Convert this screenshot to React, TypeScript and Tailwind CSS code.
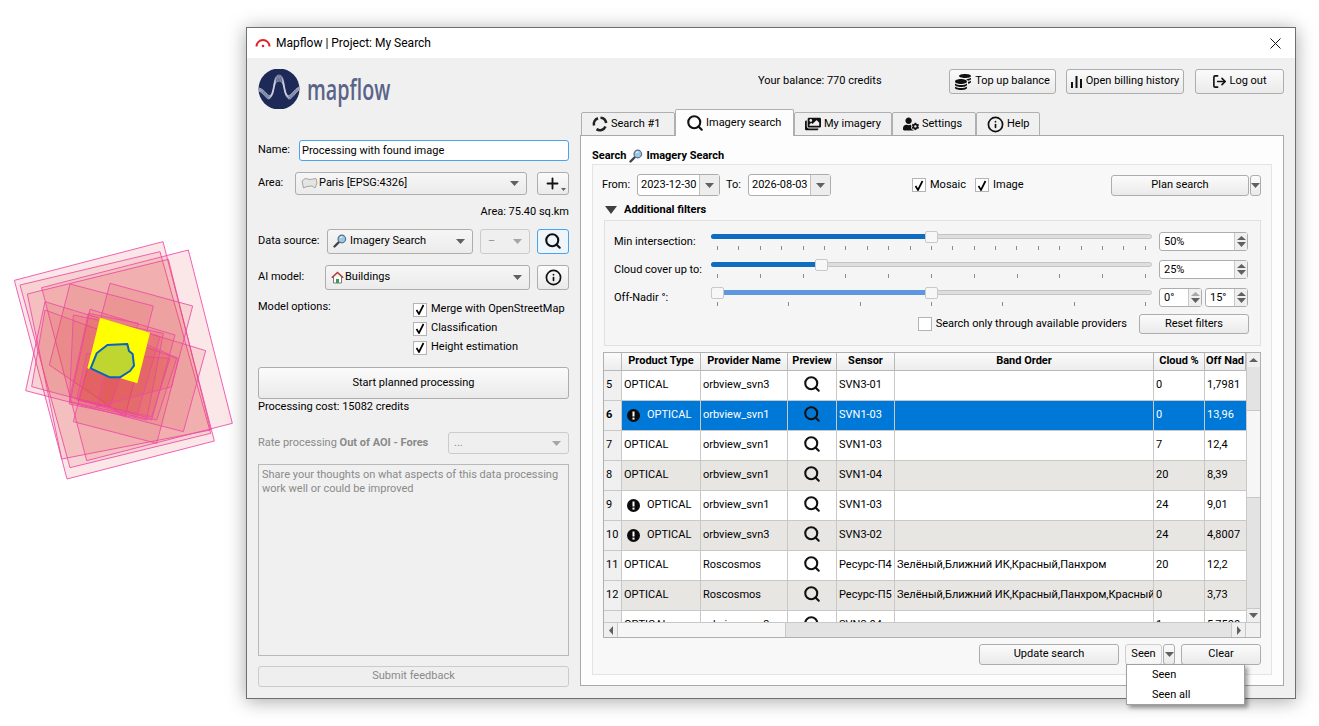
import * as React from "react";
import { Info, LogOut, Plus, Search } from "lucide-react";
import { FaCoins, FaImages, FaUserCog } from "react-icons/fa";

const BTN =
  "flex items-center justify-center rounded-[3px] border border-[#adadad] bg-[linear-gradient(#fbfbfb,#eaeaea)] text-black";
const COMBO =
  "flex items-center rounded-[3px] border border-[#adadad] bg-[linear-gradient(#f6f6f6,#ebebeb)] text-black";

const COLS = "grid grid-cols-[18px_79px_87px_49px_58px_259px_51px_41px]";

const FOOTPRINTS = [
  "43,181 489,65 643,663 201,777",
  "60,195 480,95 632,640 210,743",
  "82,222 505,118 632,630 185,717",
  "565,90 697,610 260,722 125,203",
  "330,190 578,258 470,670 220,605",
  "210,192 460,258 375,590 148,435",
  "135,245 617,392 550,635 77,512",
  "135,270 530,415 470,600 95,500",
  "270,268 525,345 455,600 210,545",
  "220,285 490,340 440,600 208,552",
  "265,280 415,310 330,560 210,530",
  "260,400 510,415 455,590 230,540",
  "300,300 480,350 410,590 235,540",
  "340,330 535,415 515,500 290,560",
];

const ROWS = [
  { n: "5", warn: false, provider: "orbview_svn3", sensor: "SVN3-01", bands: "", cloud: "0", nadir: "1,7981" },
  { n: "6", warn: true, provider: "orbview_svn1", sensor: "SVN1-03", bands: "", cloud: "0", nadir: "13,96", selected: true },
  { n: "7", warn: false, provider: "orbview_svn1", sensor: "SVN1-03", bands: "", cloud: "7", nadir: "12,4" },
  { n: "8", warn: false, provider: "orbview_svn1", sensor: "SVN1-04", bands: "", cloud: "20", nadir: "8,39", alt: true },
  { n: "9", warn: true, provider: "orbview_svn1", sensor: "SVN1-03", bands: "", cloud: "24", nadir: "9,01" },
  { n: "10", warn: true, provider: "orbview_svn3", sensor: "SVN3-02", bands: "", cloud: "24", nadir: "4,8007", alt: true },
  { n: "11", warn: false, provider: "Roscosmos", sensor: "Ресурс-П4", bands: "Зелёный,Ближний ИК,Красный,Панхром", cloud: "20", nadir: "12,2" },
  { n: "12", warn: false, provider: "Roscosmos", sensor: "Ресурс-П5", bands: "Зелёный,Ближний ИК,Красный,Панхром,Красный", cloud: "0", nadir: "3,73", alt: true },
  { n: "", warn: false, provider: "orbview_svn3", sensor: "SVN3-04", bands: "", cloud: "1", nadir: "5,7500" },
];

function Caret({ className = "" }: { className?: string }) {
  return (
    <svg width={9} height={5} viewBox="0 0 9 5" className={className} aria-hidden>
      <path d="M0 0H9L4.5 5Z" fill="#606060" />
    </svg>
  );
}

function CaretUp({ muted }: { muted?: boolean }) {
  return (
    <svg width={9} height={4} viewBox="0 0 9 4" aria-hidden>
      <path d="M0 4H9L4.5 0Z" fill={muted ? "#a8a8a8" : "#606060"} />
    </svg>
  );
}

function CheckBox({ checked = true }: { checked?: boolean }) {
  return (
    <span className="flex h-[14px] w-[14px] shrink-0 items-center justify-center border border-[#b4b4b4] bg-white">
      {checked && (
        <svg width={10} height={11} viewBox="0 0 10 11" fill="none" aria-hidden>
          <path d="M1.5 6L4 10L8.5 1" stroke="#000" strokeWidth={1.7} />
        </svg>
      )}
    </span>
  );
}

function MagnifierGlyph() {
  return (
    <svg width={14} height={14} viewBox="0 0 14 14" fill="none" aria-hidden>
      <path d="M6 8L1.5 12.5" stroke="#444" strokeWidth={2.4} strokeLinecap="round" />
      <circle cx={8.8} cy={5} r={3.8} fill="#9cc6e6" stroke="#54718a" strokeWidth={1.2} />
      <path d="M7 3.6C7.6 3 8.4 2.8 9.4 3" stroke="#fff" strokeWidth={1} />
    </svg>
  );
}

function HouseGlyph() {
  return (
    <svg width={13} height={13} viewBox="0 0 13 13" fill="none" aria-hidden>
      <path d="M2.5 6V12H10.5V6" fill="#fff" stroke="#7b7b7b" />
      <path d="M0.8 6.8L6.5 1.5L12.2 6.8" stroke="#b03a2e" strokeWidth={1.5} />
      <rect x={5} y={8} width={3} height={4} fill="#3d9a4f" />
    </svg>
  );
}

function AreaGlyph() {
  return (
    <svg width={17} height={13} viewBox="0 0 17 13" aria-hidden>
      <path
        d="M1 4L4 1.5L9 2.5L15 1.5L16 6L14 11L11 9L6 9.5L2.5 11Z"
        fill="#e4e4e4"
        stroke="#a5a5a5"
      />
    </svg>
  );
}

function SyncGlyph() {
  return (
    <svg width={16} height={16} viewBox="0 0 16 16" fill="none" aria-hidden>
      <path d="M2 9.5A6.2 6.2 0 0 1 6 2.2" stroke="#222" strokeWidth={2.6} />
      <path d="M8.5 1.8A6.2 6.2 0 0 1 14.2 7" stroke="#222" strokeWidth={2.6} />
      <path d="M13.5 10.5A6.2 6.2 0 0 1 4.5 13.2" stroke="#222" strokeWidth={2.6} />
    </svg>
  );
}

function BarsGlyph() {
  return (
    <svg width={11} height={12} viewBox="0 0 11 12" aria-hidden>
      <rect x={0} y={6} width={2} height={6} fill="#111" />
      <rect x={4.5} y={0} width={2} height={12} fill="#111" />
      <rect x={9} y={3} width={2} height={9} fill="#111" />
    </svg>
  );
}

function AlertGlyph() {
  return (
    <svg width={13} height={13} viewBox="0 0 13 13" className="shrink-0" aria-hidden>
      <circle cx={6.5} cy={6.5} r={6.5} fill="#0b0b0b" />
      <rect x={5.5} y={2.5} width={2} height={5} fill="#fff" />
      <rect x={5.5} y={8.6} width={2} height={2} fill="#fff" />
    </svg>
  );
}

function LogoMark() {
  const lines = [0, 1, 2, 3, 4, 5];
  return (
    <svg width={42} height={40} viewBox="0 0 42 40" aria-hidden>
      <circle cx={21} cy={20} r={20.5} fill="#1d2a58" />
      {lines.map((i) => (
        <path
          key={i}
          d={`M1 ${19 + i * 0.6}C7 ${20 + i} 10 ${29 + i} 13 ${26 + i * 0.4}C17 ${19 + i} 15 ${6 + i * 1.2} 21 ${6 + i * 1.2}C27 ${6 + i * 1.2} 25 ${19 + i} 29 ${26 + i * 0.4}C32 ${29 + i} 36 ${20 + i} 41 ${18 + i * 0.6}`}
          stroke="#d5d9e6"
          strokeWidth={0.6}
          fill="none"
        />
      ))}
    </svg>
  );
}

// knob positions are the pixel left edges of the slider handles
function Slider({
  from,
  to,
  ticks,
  fill = "bg-[#0f6cc0]",
}: {
  from?: number;
  to: number;
  ticks: number;
  fill?: string;
}) {
  const start = from ?? 0;
  return (
    <div className="relative h-[28px] w-[441px]">
      <div className="absolute left-0 right-0 top-[7px] h-[5px] rounded-full border border-[#c4c4c4] bg-[#dedede]" />
      <div
        className={`absolute top-[7px] h-[5px] rounded-full ${fill}`}
        style={{ left: start, width: to - start + 6 }}
      />
      {from !== undefined && (
        <span
          className="absolute top-[4px] h-[12px] w-[13px] rounded-[2px] border border-[#c9c9c9] bg-[#f7f7f7]"
          style={{ left: from }}
        />
      )}
      <span
        className="absolute top-[4px] h-[12px] w-[13px] rounded-[2px] border border-[#c9c9c9] bg-[#f7f7f7]"
        style={{ left: to }}
      />
      <div className="absolute left-[6px] right-[6px] top-[19px] flex justify-between">
        {Array.from({ length: ticks }).map((_, i) => (
          <span key={i} className="h-[4px] w-px bg-[#8c8c8c]" />
        ))}
      </div>
    </div>
  );
}

function SpinBox({ value, width, muted }: { value: string; width: string; muted?: boolean }) {
  return (
    <div className={`flex h-[19px] items-stretch rounded-[3px] border border-[#adadad] bg-white ${width}`}>
      <span className="flex-1 pl-[4px] leading-[17px]">{value}</span>
      <span className="flex w-[13px] flex-col items-center justify-center gap-[2px] border-l border-[#c8c8c8] bg-[#efefef]">
        <CaretUp muted={muted} />
        <Caret />
      </span>
    </div>
  );
}

function Tab({
  icon,
  label,
  width,
  active,
}: {
  icon: React.ReactNode;
  label: string;
  width: string;
  active?: boolean;
}) {
  return (
    <div
      className={`flex items-center gap-[3px] rounded-t-[2px] border border-[#b0b0b0] pl-[10px] ${width} ${
        active ? "relative z-10 h-[27px] border-b-0 bg-[#fdfdfd]" : "h-[24px] bg-[#f0f0f0]"
      }`}
    >
      {icon}
      <span className="whitespace-nowrap">{label}</span>
    </div>
  );
}

function DateBox({ value }: { value: string }) {
  return (
    <div className="flex h-[22px] w-[83px] items-stretch rounded-[3px] border border-[#adadad] bg-white">
      <span className="flex-1 pl-[3px] leading-[20px]">{value}</span>
      <span className="flex w-[20px] items-center justify-center border-l border-[#c0c0c0] bg-[#ededed]">
        <Caret />
      </span>
    </div>
  );
}

function Row({ row }: { row: (typeof ROWS)[number] }) {
  const bg = row.selected ? "bg-[#0078d7] text-white" : row.alt ? "bg-[#e8e6e3]" : "bg-white";
  const cell = "flex h-[30px] items-center border-b border-r border-[#c8c8c8] pl-[2px] whitespace-nowrap overflow-hidden";
  return (
    <div className={COLS}>
      <div
        className={`flex h-[30px] items-center border-b border-r border-[#c8c8c8] bg-[#f0f0f0] pl-[2px] text-black ${
          row.selected ? "font-bold" : ""
        }`}
      >
        {row.n}
      </div>
      <div className={`${cell} ${bg} gap-[7px]`}>
        {row.warn && (
          <span className="ml-[3px]">
            <AlertGlyph />
          </span>
        )}
        OPTICAL
      </div>
      <div className={`${cell} ${bg}`}>{row.provider}</div>
      <div className={`${cell} ${bg} justify-center !pl-0 pb-[3px]`}>
        <Search size={18} strokeWidth={2.8} color="#111" />
      </div>
      <div className={`${cell} ${bg}`}>{row.sensor}</div>
      <div className={`${cell} ${bg}`}>{row.bands}</div>
      <div className={`${cell} ${bg}`}>{row.cloud}</div>
      <div className={`${cell} ${bg} !border-r-0`}>{row.nadir}</div>
    </div>
  );
}

function HeaderCell({ label }: { label: string }) {
  return (
    <div className="flex h-[18px] items-center justify-center overflow-hidden whitespace-nowrap border-b border-r border-[#b8b8b8] bg-[linear-gradient(#fbfbfb,#ececec)] font-bold">
      {label}
    </div>
  );
}

function ResultsTable() {
  return (
    <div className="ml-[10px] mt-[6px] flex h-[286px] w-[658px] flex-col border border-[#b0b0b0] bg-white">
      <div className="flex h-[269px]">
        <div className="w-[642px] overflow-hidden">
          <div className={COLS}>
            <HeaderCell label="" />
            <HeaderCell label="Product Type" />
            <HeaderCell label="Provider Name" />
            <HeaderCell label="Preview" />
            <HeaderCell label="Sensor" />
            <HeaderCell label="Band Order" />
            <HeaderCell label="Cloud %" />
            <HeaderCell label="Off Nad" />
          </div>
          {ROWS.map((row) => (
            <Row key={row.sensor + row.n} row={row} />
          ))}
        </div>
        <div className="flex w-[14px] flex-col border-l border-[#c8c8c8] bg-[#e3e3e3]">
          <span className="flex h-[14px] items-center justify-center bg-[#efefef]">
            <CaretUp />
          </span>
          <span className="mt-[43px] h-[88px] border-y border-[#c8c8c8] bg-[#f6f6f6]" />
          <span className="mt-auto flex h-[14px] items-center justify-center border-t border-[#c8c8c8] bg-[#efefef]">
            <Caret />
          </span>
        </div>
      </div>
      <div className="flex h-[15px] border-t border-[#c8c8c8] bg-[#e3e3e3]">
        <span className="flex w-[14px] items-center justify-center border-r border-[#c8c8c8] bg-[#efefef]">
          <svg width={4} height={9} viewBox="0 0 4 9" aria-hidden>
            <path d="M4 0V9L0 4.5Z" fill="#606060" />
          </svg>
        </span>
        <span className="w-[168px] border-r border-[#c8c8c8] bg-[#f6f6f6]" />
        <span className="ml-auto flex w-[14px] items-center justify-center border-l border-[#c8c8c8] bg-[#efefef]">
          <svg width={4} height={9} viewBox="0 0 4 9" aria-hidden>
            <path d="M0 0V9L4 4.5Z" fill="#606060" />
          </svg>
        </span>
        <span className="w-[15px] border-l border-[#c8c8c8] bg-[#f0f0f0]" />
      </div>
    </div>
  );
}

function LeftPanel() {
  return (
    <div className="flex w-[311px] flex-col pt-[11px]">
      <div className="flex h-[40px] items-center">
        <LogoMark />
        <span className="ml-[7px] origin-left scale-x-[0.68] font-['Open_Sans',sans-serif] text-[29px] font-semibold leading-[40px] text-[#5a6488]">
          mapflow
        </span>
      </div>

      <div className="mt-[31px] flex h-[21px] items-center">
        <span className="w-[41px]">Name:</span>
        <div className="h-[21px] flex-1 rounded-[3px] border border-[#4aa3ee] bg-white pl-[2px] leading-[19px]">
          Processing with found image
        </div>
      </div>

      <div className="mt-[10px] flex h-[24px] items-center">
        <span className="w-[37px]">Area:</span>
        <div className={`${COMBO} h-[23px] w-[232px] pl-[5px]`}>
          <AreaGlyph />
          <span className="ml-[1px]">Paris [EPSG:4326]</span>
          <Caret className="ml-auto mr-[7px]" />
        </div>
        <div className={`${BTN} relative ml-auto h-[23px] w-[32px]`}>
          <Plus size={17} strokeWidth={2.6} color="#111" className="mr-[2px]" />
          <svg width={5} height={3} viewBox="0 0 5 3" className="absolute bottom-[3px] right-[2px]" aria-hidden>
            <path d="M0 0H5L2.5 3Z" fill="#606060" />
          </svg>
        </div>
      </div>

      <div className="mt-[10px] h-[14px] text-right leading-[14px]">Area: 75.40 sq.km</div>

      <div className="mt-[9px] flex h-[26px] items-center">
        <span className="w-[69px]">Data source:</span>
        <div className={`${COMBO} h-[25px] w-[146px] pl-[5px]`}>
          <MagnifierGlyph />
          <span className="ml-[3px]">Imagery Search</span>
          <Caret className="ml-auto mr-[7px]" />
        </div>
        <div className="ml-[7px] flex h-[25px] w-[50px] items-center rounded-[3px] border border-[#cbcbcb] bg-[#efefef] pl-[7px] text-[#909090]">
          –
          <Caret className="ml-auto mr-[7px] opacity-50" />
        </div>
        <div className="ml-auto flex h-[25px] w-[32px] items-center justify-center rounded-[3px] border border-[#4aa3ee] bg-[#eef6fc]">
          <Search size={18} strokeWidth={2.8} color="#111" />
        </div>
      </div>

      <div className="mt-[10px] flex h-[26px] items-center">
        <span className="w-[67px]">AI model:</span>
        <div className={`${COMBO} h-[25px] w-[205px] pl-[5px]`}>
          <HouseGlyph />
          <span className="ml-[1px]">Buildings</span>
          <Caret className="ml-auto mr-[7px]" />
        </div>
        <div className={`${BTN} ml-auto h-[25px] w-[32px]`}>
          <Info size={17} strokeWidth={2.4} color="#111" />
        </div>
      </div>

      <div className="mt-[10px] flex h-[57px]">
        <span className="w-[155px] leading-[14px]">Model options:</span>
        <div className="flex flex-col">
          {["Merge with OpenStreetMap", "Classification", "Height estimation"].map((t) => (
            <div key={t} className="flex h-[19px] items-center gap-[4px] whitespace-nowrap">
              <CheckBox />
              {t}
            </div>
          ))}
        </div>
      </div>

      <div className={`${BTN} mt-[10px] h-[32px]`}>Start planned processing</div>
      <div className="mt-px h-[14px] leading-[14px]">Processing cost: 15082 credits</div>

      <div className="mt-[18px] flex h-[22px] items-center text-[#8a8a8a]">
        <span className="w-[190px] whitespace-nowrap">
          Rate processing <b>Out of AOI - Fores</b>
        </span>
        <div className="flex h-[22px] flex-1 items-center rounded-[3px] border border-[#cbcbcb] bg-[#efefef] pl-[5px]">
          ...
          <Caret className="ml-auto mr-[7px] opacity-50" />
        </div>
      </div>

      <div className="mt-[10px] h-[192px] border border-[#b8b8b8] bg-[#f0f0f0] px-[3px] py-[3px] leading-[14px] text-[#8a8a8a]">
        Share your thoughts on what aspects of this data processing work well or could be improved
      </div>

      <div className="mt-[10px] flex h-[21px] items-center justify-center rounded-[3px] border border-[#cbcbcb] bg-[#efefef] text-[#8a8a8a]">
        Submit feedback
      </div>
    </div>
  );
}

function SearchPane() {
  return (
    <div className="relative z-0 mt-[-1px] h-[551px] border border-[#a8a8a8] bg-[#fdfdfd] px-[11px] pt-[13px]">
      <div className="flex h-[14px] items-center gap-[3px] font-bold leading-[14px]">
        Search
        <MagnifierGlyph />
        Imagery Search
      </div>

      <div className="mt-[1px] h-[511px] border border-[#e4e4e4] bg-[#f8f8f8]">
        <div className="mt-[9px] flex h-[22px] items-center pl-[9px]">
          <span className="w-[35px]">From:</span>
          <DateBox value="2023-12-30" />
          <span className="ml-[6px] w-[22px]">To:</span>
          <DateBox value="2026-08-03" />
          <span className="ml-[81px] flex w-[63px] items-center gap-[4px]">
            <CheckBox />
            Mosaic
          </span>
          <span className="flex w-[136px] items-center gap-[4px]">
            <CheckBox />
            Image
          </span>
          <div className={`${BTN} h-[21px] w-[138px]`}>Plan search</div>
          <div className={`${BTN} ml-px h-[21px] w-[11px]`}>
            <Caret />
          </div>
        </div>

        <div className="mt-[7px] flex h-[14px] items-center pl-[12px] font-bold">
          <svg width={12} height={8} viewBox="0 0 12 8" aria-hidden>
            <path d="M0 0H12L6 8Z" fill="#404040" />
          </svg>
          <span className="ml-[7px]">Additional filters</span>
        </div>

        <div className="ml-[11px] mt-[3px] h-[126px] w-[657px] border border-[#e0e0e0] bg-[#f5f5f5] pt-[6px]">
          <div className="flex h-[28px] pl-[9px]">
            <span className="w-[97px] pt-[8px] leading-[14px]">Min intersection:</span>
            <Slider to={214} ticks={21} />
            <div className="ml-[7px] mt-[5px]">
              <SpinBox value="50%" width="w-[89px]" />
            </div>
          </div>
          <div className="flex h-[28px] pl-[9px]">
            <span className="w-[97px] pt-[8px] leading-[14px]">Cloud cover up to:</span>
            <Slider to={104} ticks={11} />
            <div className="ml-[7px] mt-[5px]">
              <SpinBox value="25%" width="w-[89px]" />
            </div>
          </div>
          <div className="flex h-[28px] pl-[9px]">
            <span className="w-[97px] pt-[8px] leading-[14px]">Off-Nadir °:</span>
            <Slider from={0} to={214} ticks={7} fill="bg-[#5f96e0]" />
            <div className="ml-[7px] mt-[5px] flex gap-[3px]">
              <SpinBox value="0°" width="w-[43px]" muted />
              <SpinBox value="15°" width="w-[43px]" />
            </div>
          </div>
          <div className="mt-[3px] flex h-[20px] items-center justify-end pr-[11px]">
            <CheckBox checked={false} />
            <span className="ml-[4px]">Search only through available providers</span>
            <div className={`${BTN} ml-[12px] h-[20px] w-[110px]`}>Reset filters</div>
          </div>
        </div>

        <ResultsTable />

        <div className="mt-[6px] flex h-[21px] justify-end pr-[10px]">
          <div className={`${BTN} h-[21px] w-[140px]`}>Update search</div>
          <div className="ml-[6px] flex h-[21px] w-[37px] items-center justify-center rounded-[3px] border border-[#cfcfcf] bg-[#f6f6f6]">
            Seen
          </div>
          <div className={`${BTN} ml-[1px] h-[21px] w-[12px]`}>
            <Caret />
          </div>
          <div className={`${BTN} ml-[6px] h-[21px] w-[80px]`}>Clear</div>
        </div>
      </div>

      <div className="absolute left-[545px] top-[528px] z-20 flex h-[41px] w-[119px] flex-col justify-center border border-[#a0a0a0] bg-white pl-[25px] shadow-[3px_3px_4px_rgba(0,0,0,0.35)]">
        <div className="h-[20px] leading-[20px]">Seen</div>
        <div className="h-[20px] leading-[20px]">Seen all</div>
      </div>
    </div>
  );
}

function RightPanel() {
  return (
    <div className="ml-[11px] flex w-[704px] flex-col pt-[11px]">
      <div className="flex h-[25px] items-center">
        <span className="ml-[178px]">Your balance: 770 credits</span>
        <div className={`${BTN} ml-auto h-[25px] w-[107px] gap-[4px]`}>
          <FaCoins size={16} color="#111" />
          Top up balance
        </div>
        <div className={`${BTN} ml-[10px] h-[25px] w-[118px] gap-[4px]`}>
          <BarsGlyph />
          Open billing history
        </div>
        <div className={`${BTN} ml-[11px] h-[25px] w-[89px] gap-[2px]`}>
          <LogOut size={15} strokeWidth={2.6} color="#111" />
          Log out
        </div>
      </div>

      <div className="mt-[16px] flex h-[26px] items-end pl-px">
        <Tab width="w-[94px]" icon={<SyncGlyph />} label="Search #1" />
        <Tab
          width="w-[119px]"
          icon={<Search size={18} strokeWidth={2.8} color="#111" className="mr-[-1px]" />}
          label="Imagery search"
          active
        />
        <Tab width="w-[98px]" icon={<FaImages size={16} color="#111" />} label="My imagery" />
        <Tab width="w-[84px]" icon={<FaUserCog size={16} color="#111" />} label="Settings" />
        <Tab width="w-[64px]" icon={<Info size={17} strokeWidth={2.4} color="#111" />} label="Help" />
      </div>

      <SearchPane />
    </div>
  );
}

export default function App() {
  return (
    <div className="flex h-[726px] w-[1319px] overflow-hidden bg-white pt-[27px] font-['Roboto',sans-serif] text-[11px] text-black">
      <div className="w-[246px] shrink-0 pt-[193px]">
        <svg width={250} height={270} viewBox="0 0 750 810" aria-hidden>
          {FOOTPRINTS.map((points) => (
            <polygon key={points} points={points} fill="rgba(226,70,72,0.13)" stroke="#ee4aa8" strokeWidth={2.6} />
          ))}
          <polygon points="300,293 450,338 412,490 262,445" fill="#ffff00" />
          <polygon
            points="322,375 382,372 387,393 398,402 402,437 390,453 360,472 330,472 272,445 290,400"
            fill="#bfd630"
            stroke="#0d62bf"
            strokeWidth={6}
            strokeLinejoin="round"
          />
        </svg>
      </div>

      <div className="flex h-[672px] w-[1050px] shrink-0 flex-col border border-[#6f6f6f] bg-[#f0f0f0] shadow-[0_2px_18px_rgba(0,0,0,0.35)]">
        <div className="flex h-[30px] items-center bg-white pl-[8px] pr-[14px]">
          <svg width={16} height={10} viewBox="0 0 16 10" fill="none" aria-hidden>
            <path d="M1.5 8.5A6.5 6.5 0 0 1 14.5 8.5" stroke="#e3202a" strokeWidth={2} />
            <circle cx={8} cy={8} r={1.3} fill="#e3202a" />
          </svg>
          <span className="ml-[5px] text-[12px]">Mapflow | Project: My Search</span>
          <svg width={11} height={11} viewBox="0 0 11 11" className="ml-auto" aria-hidden>
            <path d="M0.5 0.5L10.5 10.5M10.5 0.5L0.5 10.5" stroke="#111" strokeWidth={1} />
          </svg>
        </div>
        <div className="flex h-[640px] bg-[#f0f0f0] pl-[11px]">
          <LeftPanel />
          <RightPanel />
        </div>
      </div>
    </div>
  );
}
